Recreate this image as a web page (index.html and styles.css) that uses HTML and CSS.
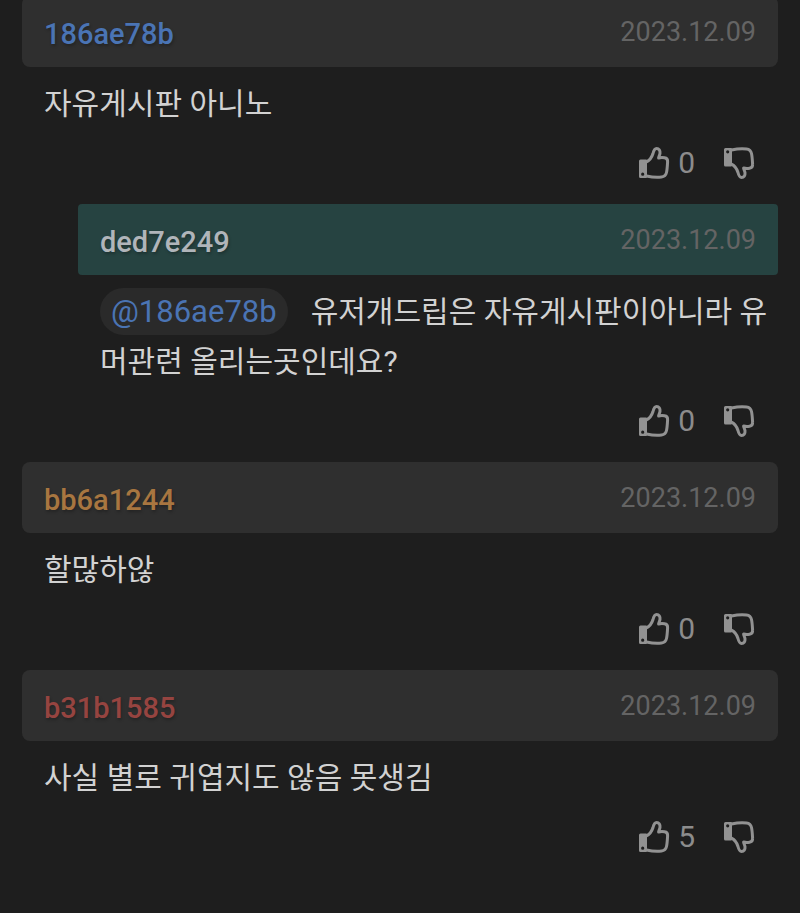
FILE: index.html
```html
<!DOCTYPE html>
<html lang="ko">
<head>
    <meta charset="UTF-8">
    <meta name="viewport" content="width=device-width, initial-scale=1.0">
    <title>댓글</title>
    <link rel="stylesheet" href="styles.css">
</head>
<body>
    <!-- Shared icon shapes -->
    <svg class="sprite" aria-hidden="true">
        <symbol id="thumb" viewBox="0 0 32 34">
            <path class="cuff" fill-rule="evenodd" d="M2.500 13.500h5.500a1 1 0 0 1 1 1v16.500a1 1 0 0 1-1 1h-5.500a1.500 1.500 0 0 1-1.500-1.500v-15.500a1.500 1.500 0 0 1 1.500-1.500zM4.700 26.600a1.600 1.600 0 1 0 0 3.200a1.600 1.600 0 0 0 0-3.200z"/>
            <path class="hand" d="M8.500 15.800C11.500 14.300 13.800 11.500 15 7.500C15.700 4.500 16.500 2.500 18.600 2.500C21 2.500 22.300 4.700 22 7.200C21.800 9 20.600 10.600 20.600 12C22.500 11.500 24.500 11.500 26.500 11.800C28.700 12.100 29.800 13.600 29.600 15.800C29.400 19.500 29.200 23.500 28.500 26.500C27.900 29.300 26.300 30.700 23.500 31C18.500 31.600 13 31 8.500 30"/>
        </symbol>
    </svg>

    <main class="comments">
        <article class="comment">
            <header class="comment-header">
                <a href="#" class="author blue">186ae78b</a>
                <time class="date" datetime="2023-12-09">2023.12.09</time>
            </header>
            <p class="comment-text">자유게시판 아니노</p>
            <div class="votes">
                <button class="vote" type="button" aria-label="추천"><svg class="icon"><use href="#thumb"/></svg>0</button>
                <button class="vote" type="button" aria-label="비추천"><svg class="icon down"><use href="#thumb"/></svg></button>
            </div>
        </article>

        <article class="comment reply">
            <header class="comment-header">
                <a href="#" class="author">ded7e249</a>
                <time class="date" datetime="2023-12-09">2023.12.09</time>
            </header>
            <p class="comment-text"><a href="#" class="mention">@186ae78b</a>유저개드립은 자유게시판이아니라 유머관련 올리는곳인데요?</p>
            <div class="votes">
                <button class="vote" type="button" aria-label="추천"><svg class="icon"><use href="#thumb"/></svg>0</button>
                <button class="vote" type="button" aria-label="비추천"><svg class="icon down"><use href="#thumb"/></svg></button>
            </div>
        </article>

        <article class="comment">
            <header class="comment-header">
                <a href="#" class="author orange">bb6a1244</a>
                <time class="date" datetime="2023-12-09">2023.12.09</time>
            </header>
            <p class="comment-text">할많하않</p>
            <div class="votes">
                <button class="vote" type="button" aria-label="추천"><svg class="icon"><use href="#thumb"/></svg>0</button>
                <button class="vote" type="button" aria-label="비추천"><svg class="icon down"><use href="#thumb"/></svg></button>
            </div>
        </article>

        <article class="comment">
            <header class="comment-header">
                <a href="#" class="author red">b31b1585</a>
                <time class="date" datetime="2023-12-09">2023.12.09</time>
            </header>
            <p class="comment-text">사실 별로 귀엽지도 않음 못생김</p>
            <div class="votes">
                <button class="vote" type="button" aria-label="추천"><svg class="icon"><use href="#thumb"/></svg>5</button>
                <button class="vote" type="button" aria-label="비추천"><svg class="icon down"><use href="#thumb"/></svg></button>
            </div>
        </article>
    </main>
</body>
</html>
```
FILE: styles.css
```css
body {
    margin: 0;
    background-color: #1e1e1e;
    color: #d2d2d2;
    font-family: Roboto, "Noto Sans CJK KR", sans-serif;
}
.sprite {
    display: none;
}
.comments {
    margin-top: -4px; /* List is scrolled slightly past the first header */
    padding: 0 22px;
}
.comment-header {
    display: flex;
    justify-content: space-between;
    align-items: center;
    box-sizing: border-box;
    height: 71px;
    padding: 0 22px;
    background-color: #2f2f2f;
    border-radius: 8px;
}
.reply {
    margin-left: 56px;
}
.reply .comment-header {
    background-color: #264341;
    border-radius: 4px;
}
.author {
    padding-top: 4px;
    color: #b0b5ba;
    font-size: 29px;
    font-weight: 500;
    text-decoration: none;
    text-shadow: 1px 2px 3px rgba(0, 0, 0, 0.25);
}
.author.blue {
    color: #4a74b4;
}
.author.orange {
    color: #a87640;
}
.author.red {
    color: #964440;
}
.date {
    color: #646464;
    font-size: 27px;
}
.comment-text {
    margin: 0;
    padding: 12px 0 0 22px;
    font-size: 30px;
    line-height: 50px;
    word-break: break-all;
}
.mention {
    display: inline-block;
    margin-right: 23px;
    padding: 0 11px;
    border-radius: 24px;
    background-color: #2a2a2a;
    color: #4a74b4;
    font-size: 31px;
    line-height: 47px;
    text-decoration: none;
}
.votes {
    display: flex;
    justify-content: flex-end;
    gap: 28px;
    height: 67px;
    padding: 0 23px 8px 0;
}
.vote {
    display: flex;
    align-items: center;
    gap: 8px;
    padding: 0;
    border: none;
    background: none;
    color: #8c8c8c;
    font-family: inherit;
    font-size: 30px;
    cursor: pointer;
}
.icon {
    width: 32px;
    height: 34px;
}
.icon.down {
    transform: scaleY(-1);
}
.cuff {
    fill: #929292;
}
.hand {
    fill: none;
    stroke: #929292;
    stroke-width: 3;
    stroke-linejoin: round;
}
```
